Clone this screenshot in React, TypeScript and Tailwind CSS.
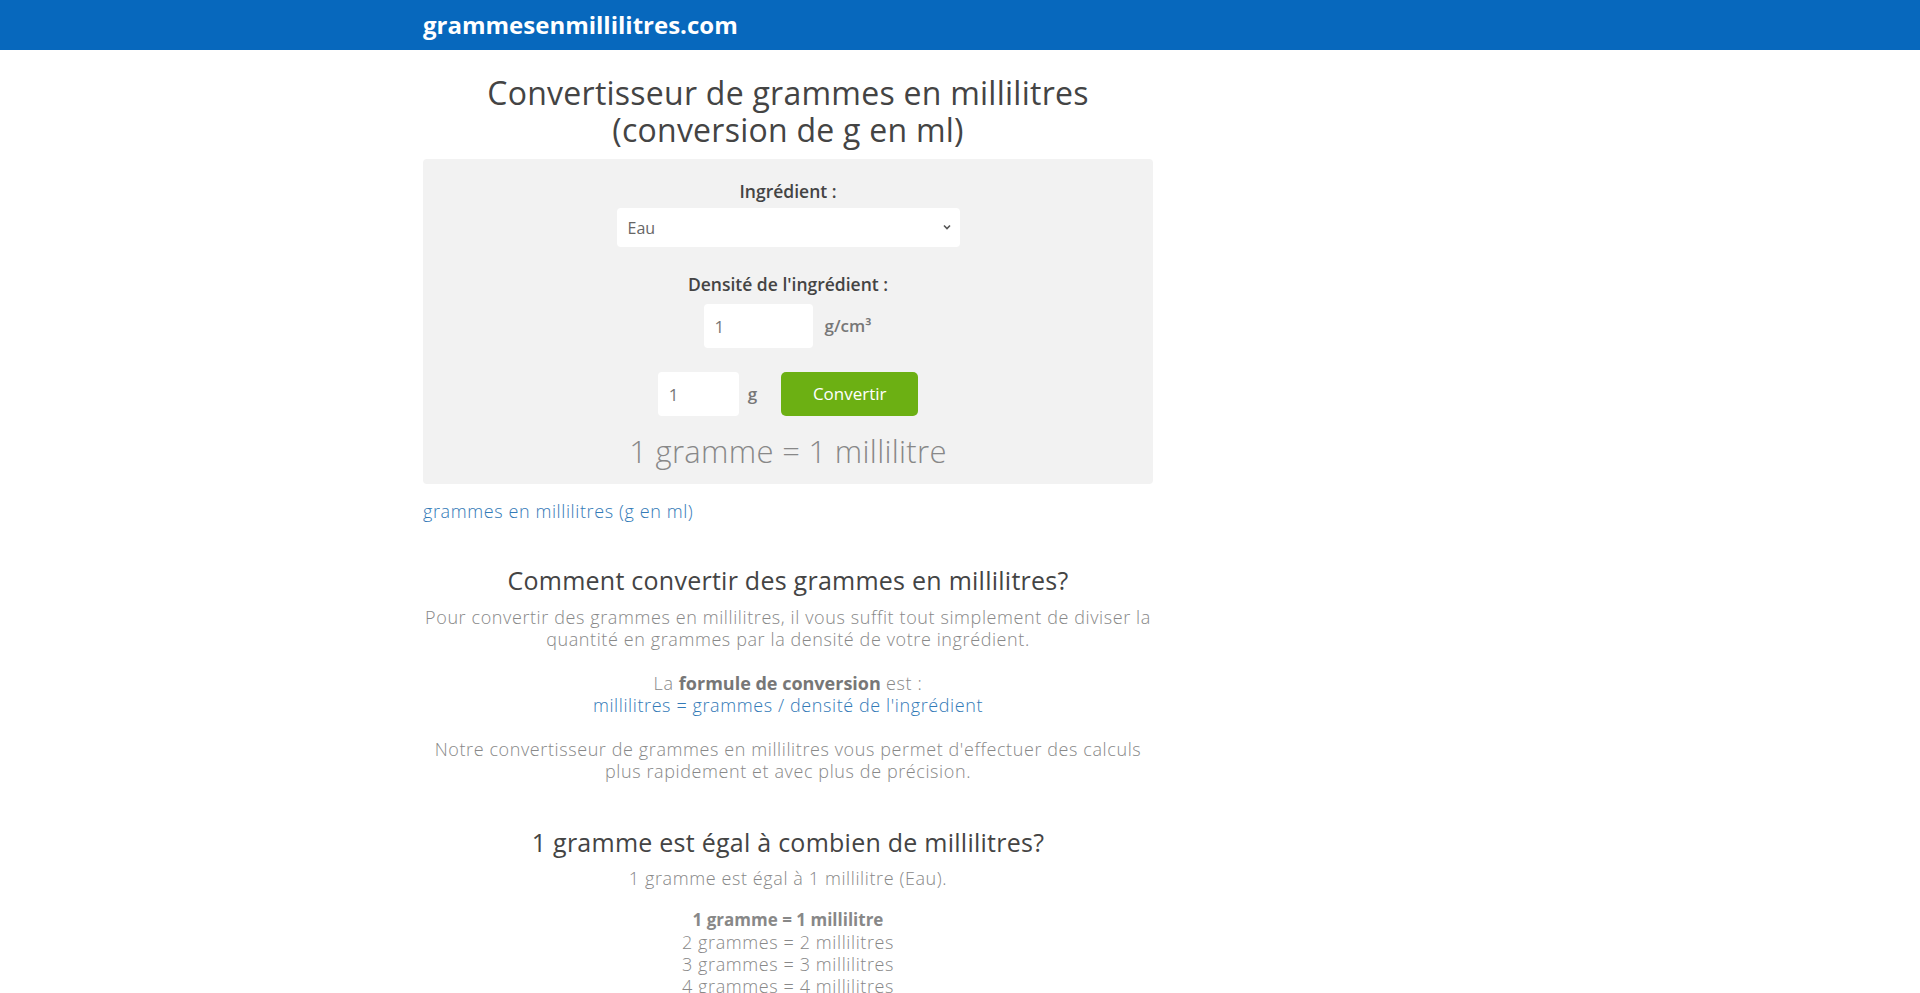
import React from 'react';

const rows = [
  { g: '1 gramme', ml: '1 millilitre', bold: true },
  { g: '2 grammes', ml: '2 millilitres' },
  { g: '3 grammes', ml: '3 millilitres' },
  { g: '4 grammes', ml: '4 millilitres' },
];

const Converter: React.FC = () => {
  return (
    <div className="mt-[11px] rounded-[4px] bg-[#f2f2f2] pt-[20px] pb-[13px] flex flex-col items-center font-['Open_Sans',sans-serif]">
      <label className="text-[17.5px] leading-[24px] font-semibold text-[#444]">Ingrédient :</label>
      <div className="relative mt-[5px] w-[343px] h-[39px]">
        <select className="appearance-none w-full h-full rounded-[4px] bg-white pl-[11px] text-[16px] text-[#666] outline-none">
          <option>Eau</option>
          <option>Lait</option>
          <option>Farine</option>
          <option>Sucre</option>
        </select>
        <svg className="pointer-events-none absolute right-[9px] top-[16px]" width="8" height="6" viewBox="0 0 8 6">
          <path d="M1 1.5 L4 4.5 L7 1.5" fill="none" stroke="#555" strokeWidth="1.6" />
        </svg>
      </div>

      <label className="mt-[25px] text-[17.5px] leading-[24px] font-semibold text-[#444]">Densité de l'ingrédient :</label>
      <div className="mt-[8px] flex items-center gap-[11px]">
        <input
          defaultValue="1"
          className="w-[109px] h-[44px] rounded-[4px] bg-white pl-[11px] text-[17px] text-[#777] outline-none"
        />
        <span className="text-[17px] font-semibold text-[#777] w-[49px]">g/cm³</span>
      </div>

      <div className="mt-[24px] flex items-center">
        <input
          defaultValue="1"
          className="w-[81px] h-[44px] rounded-[4px] bg-white pl-[11px] text-[17px] text-[#777] outline-none"
        />
        <span className="ml-[9px] text-[17px] font-semibold text-[#777]">g</span>
        <button className="ml-[24px] w-[137px] h-[44px] rounded-[5px] bg-[#6cb013] text-white text-[17px]">
          Convertir
        </button>
      </div>

      <div className="mt-[15px] text-[31px] leading-[40px] font-light tracking-[0.3px] text-[#888]">
        1 gramme = 1 millilitre
      </div>
    </div>
  );
};

const App: React.FC = () => {
  return (
    <div className="min-h-screen bg-white font-['Open_Sans',sans-serif]">
      <header className="h-[50px] bg-[#0768bd]">
        <div className="mx-auto w-[1074px] h-full flex items-center">
          <a href="#" className="text-white font-bold text-[24px] leading-none">grammesenmillilitres.com</a>
        </div>
      </header>

      <main className="mx-auto w-[1074px]">
        <div className="w-[730px] text-center">
          <h1 className="mt-[24px] text-[32px] leading-[37px] tracking-[0.25px] text-[#444]">
            Convertisseur de grammes en millilitres
            <br />
            (conversion de g en ml)
          </h1>

          <Converter />

          <div className="mt-[15px] text-left text-[18px] leading-[24px] font-light tracking-[0.6px] text-[#337ab7]">
            <a href="#">grammes en millilitres</a> (<a href="#">g en ml</a>)
          </div>

          <h2 className="mt-[42px] text-[25px] leading-[30px] font-medium tracking-[0.25px] text-[#444]">
            Comment convertir des grammes en millilitres?
          </h2>
          <p className="mt-[11px] text-[18px] leading-[22px] font-light tracking-[0.6px] text-[#888]">
            Pour convertir des grammes en millilitres, il vous suffit tout simplement de diviser la quantité en grammes par la densité de votre ingrédient.
            <br />
            <br />
            La <strong className="font-bold tracking-normal text-[#777]">formule de conversion</strong> est :
            <br />
            <span className="text-[#337ab7]">millilitres = grammes / densité de l'ingrédient</span>
            <br />
            <br />
            Notre convertisseur de grammes en millilitres vous permet d'effectuer des calculs plus rapidement et avec plus de précision.
          </p>

          <h2 className="mt-[45px] text-[25px] leading-[30px] font-medium tracking-[0.25px] text-[#444]">
            1 gramme est égal à combien de millilitres?
          </h2>
          <p className="mt-[10px] text-[18px] leading-[22px] font-light tracking-[0.6px] text-[#888]">
            1 gramme est égal à 1 millilitre (Eau).
          </p>
          <div className="mt-[20px] text-[18px] leading-[22px] font-light tracking-[0.6px] text-[#888]">
            {rows.map((r) => (
              <div key={r.g} className={r.bold ? 'font-bold text-[17px] tracking-normal text-[#888]' : ''}>
                {r.g} = {r.ml}
              </div>
            ))}
          </div>
        </div>
      </main>
    </div>
  );
};

export default App;
